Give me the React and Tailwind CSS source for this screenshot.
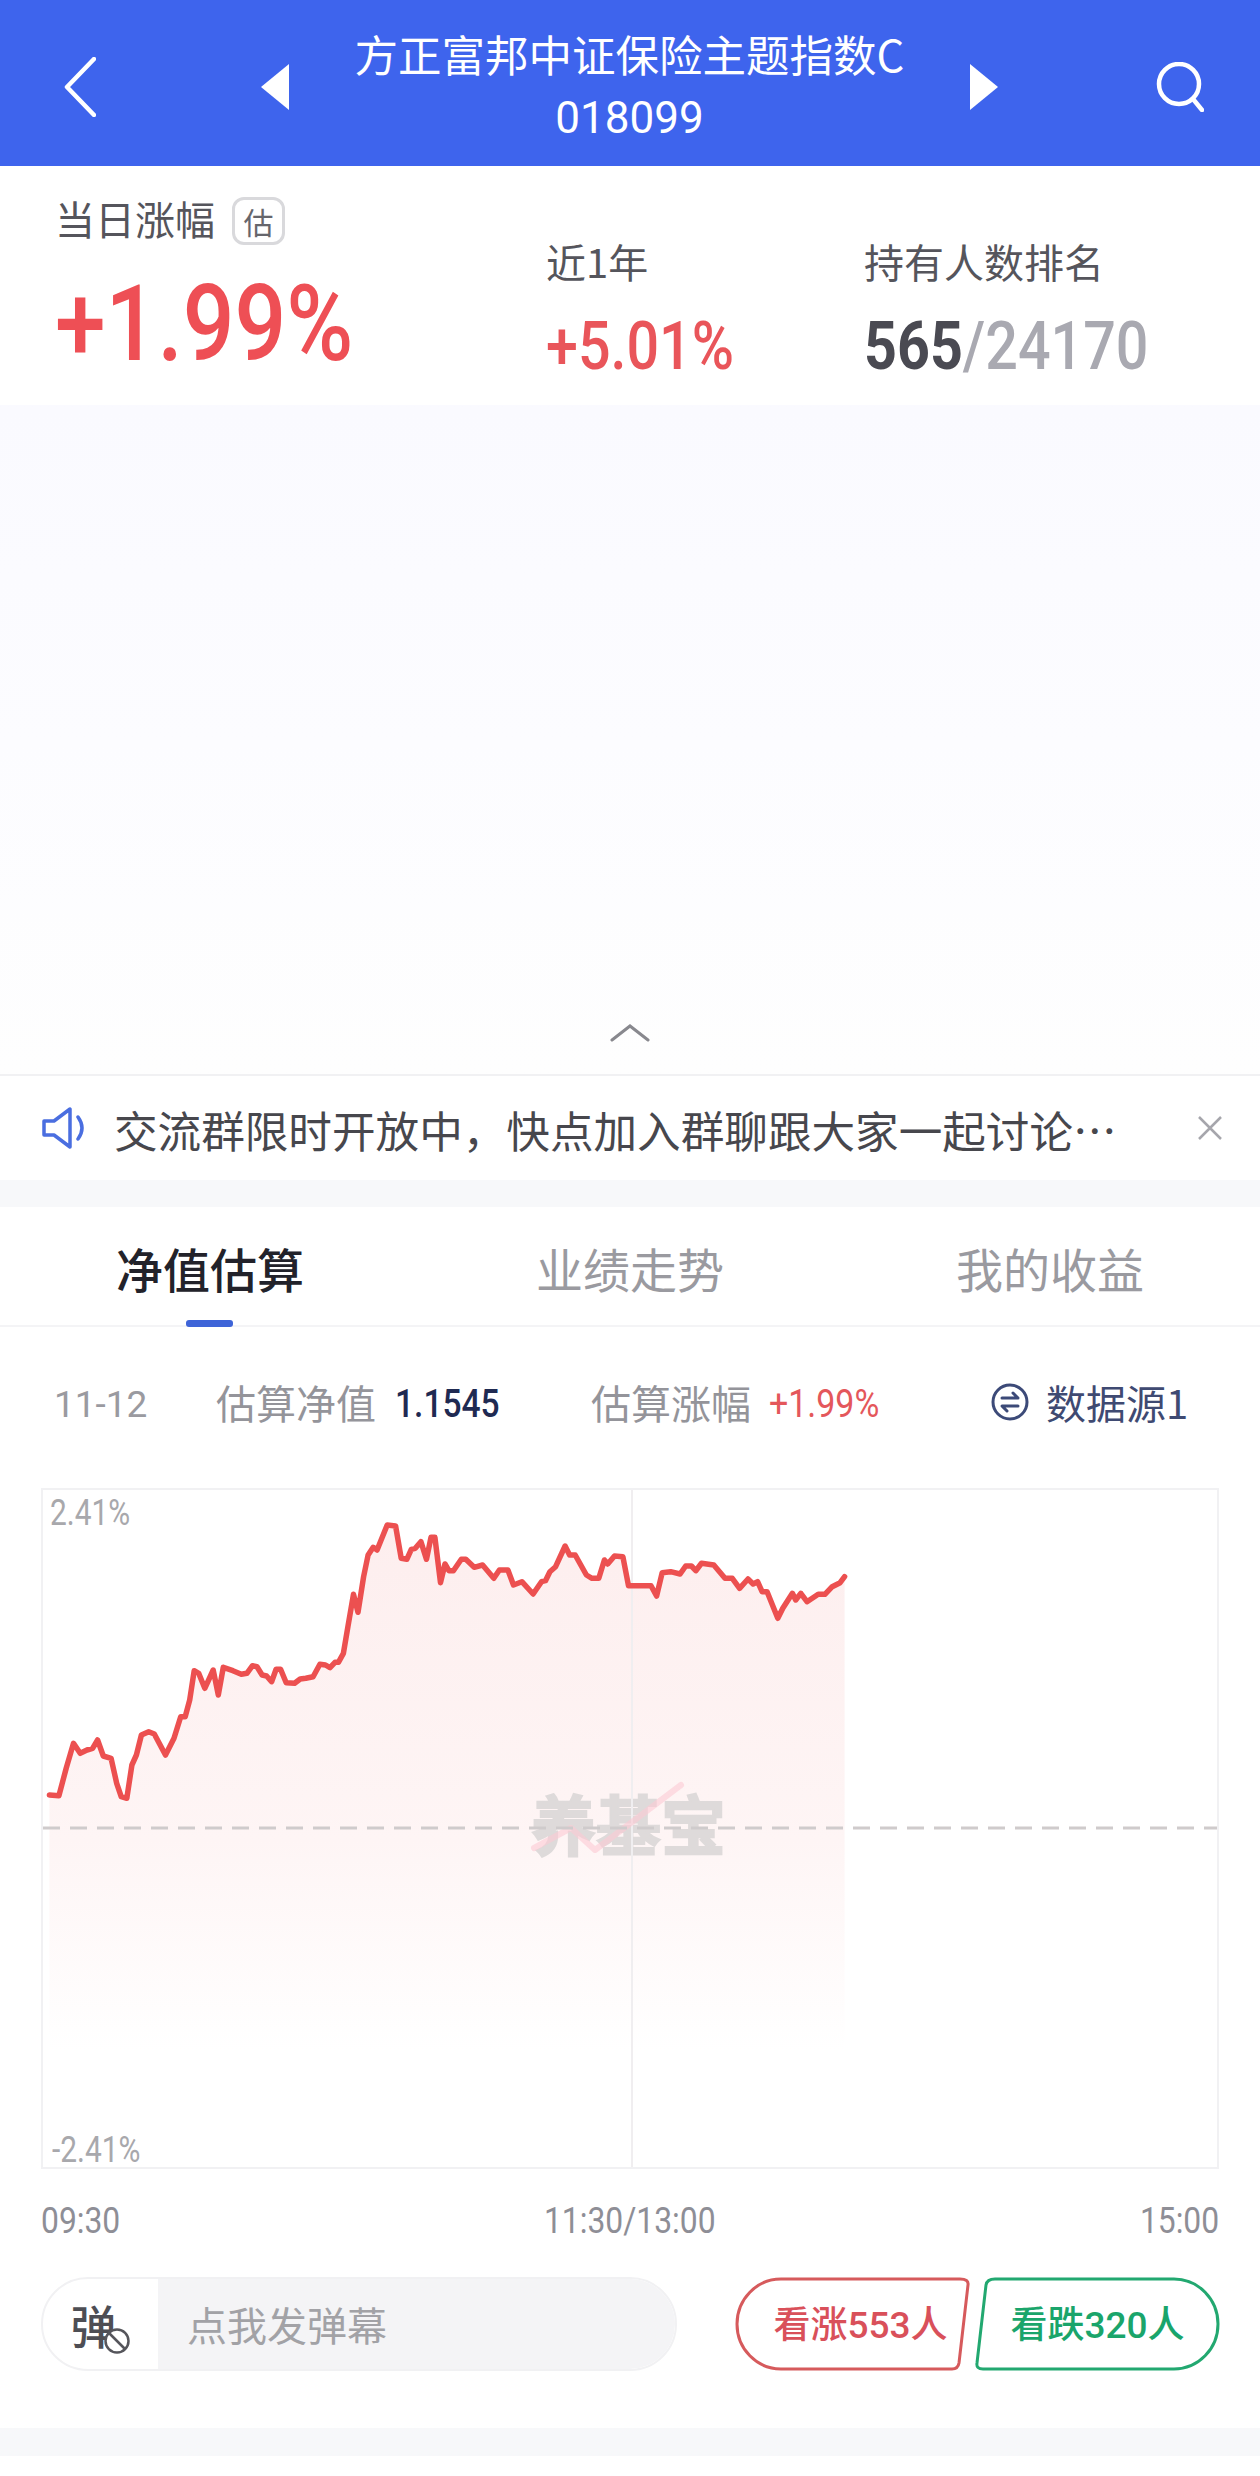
import React from 'react';

const numFont = "font-['Roboto','Liberation_Sans',sans-serif]";

// intraday estimate, x is in 1/1.782 px, y in 1/3 px above the chart origin
const rawLine = [
  [88,1005],[105,1007],[118,925],[131,850],[143,880],[155,870],[165,865],[174,840],[184,888],[198,895],[208,970],[216,1010],[226,1015],[235,915],[243,885],[252,825],[265,815],[275,822],[295,885],[310,835],[322,770],[330,770],[338,720],[346,632],[354,640],[365,685],[380,630],[389,705],[398,622],[415,632],[430,643],[440,640],[450,617],[458,620],[467,645],[475,648],[484,665],[492,628],[500,628],[510,668],[525,670],[535,657],[545,655],[558,650],[570,613],[580,615],[588,623],[597,607],[603,607],[612,580],[620,500],[630,403],[638,457],[648,350],[656,285],[665,262],[672,270],[690,195],[705,198],[715,295],[725,298],[733,268],[740,265],[750,245],[760,298],[768,232],[775,232],[785,368],[793,312],[800,332],[808,332],[822,298],[830,298],[845,322],[860,315],[880,355],[890,330],[905,330],[915,375],[930,365],[950,402],[965,365],[972,362],[980,335],[990,320],[1007,258],[1015,285],[1025,285],[1045,345],[1055,355],[1067,355],[1077,300],[1083,312],[1095,288],[1110,290],[1120,377],[1160,377],[1170,408],[1180,338],[1195,335],[1212,342],[1222,318],[1232,318],[1240,332],[1250,310],[1272,315],[1292,355],[1305,355],[1318,385],[1333,357],[1342,372],[1350,365],[1358,395],[1367,395],[1386,475],[1395,445],[1412,400],[1418,420],[1427,400],[1438,425],[1458,403],[1470,403],[1483,380],[1497,368],[1505,350],
];

const linePts = rawLine.map(([x, y]) => [(x / 1.782 - 43).toFixed(1), ((y / 3) - 30).toFixed(1)]);
const linePath = linePts.map((p) => p.join(',')).join(' ');
const areaPath = `M${linePts[0][0]},560 L${linePath.replaceAll(' ', ' L')} L${linePts[linePts.length - 1][0]},560 Z`;

const Triangle = ({ flip }) => (
  <svg viewBox="0 0 28 46" className="w-[28px] h-[46px] shrink-0" fill="#fff">
    <path d={flip ? 'M0 0 L28 23 L0 46 Z' : 'M28 0 L0 23 L28 46 Z'} />
  </svg>
);

const Chart = () => (
  <div className="relative mx-[41px] h-[681px] border-2 border-[#f1f1f3]">
    <svg viewBox="0 0 1174 677" className="absolute inset-0 w-full h-full">
      <defs>
        <linearGradient id="areaFill" x1="0" y1="0" x2="0" y2="1">
          <stop offset="0" stopColor="#fdeeee" />
          <stop offset="0.6" stopColor="#fef5f5" />
          <stop offset="1" stopColor="#ffffff" />
        </linearGradient>
      </defs>
      <path d={areaPath} fill="url(#areaFill)" />
      <text x="488" y="360" fontSize="65" fontWeight="700" fill="#dedada" stroke="#dedada" strokeWidth="2" className="font-['Noto_Sans_CJK_SC',sans-serif]">养基宝</text>
      <line x1="589" y1="0" x2="589" y2="677" stroke="#f0eef0" strokeWidth="2" />
      <path d="M491 358 L528 338 L552 360 L638 295" fill="none" stroke="#fbc9d4" strokeOpacity="0.6" strokeWidth="6" strokeLinecap="round" strokeLinejoin="round" />
      <line x1="0" y1="338" x2="1174" y2="338" stroke="#cfcbcc" strokeWidth="3" strokeDasharray="17 10" />
      <polyline points={linePath} fill="none" stroke="#ec5050" strokeWidth="5.5" strokeLinejoin="round" strokeLinecap="round" />
    </svg>
    <span className={`absolute left-[7px] top-[3px] text-[36px] leading-[40px] text-[#a8a8ac] origin-left scale-x-[0.83] ${numFont}`}>2.41%</span>
    <span className={`absolute left-[9px] top-[640px] text-[36px] leading-[40px] text-[#a8a8ac] origin-left scale-x-[0.83] ${numFont}`}>-2.41%</span>
  </div>
);

const App = () => {
  return (
    <div className="w-[1260px] h-[2476px] bg-white overflow-hidden font-['Noto_Sans_CJK_SC','Noto_Sans',sans-serif]">
      {/* top bar */}
      <header className="h-[166px] bg-[#3e64ed] flex items-center pt-[8px] pl-[64px] pr-[56px] text-white">
        <svg viewBox="0 0 32 60" className="w-[32px] h-[60px] shrink-0" fill="none" stroke="#fff" strokeWidth="4.5" strokeLinecap="round" strokeLinejoin="round">
          <path d="M30 2 L3 30 L30 58" />
        </svg>
        <div className="w-[165px] shrink-0" />
        <Triangle />
        <div className="flex-1 text-center pb-[2px]">
          <div className="text-[43.5px] leading-[64px]">方正富邦中证保险主题指数C</div>
          <div className={`text-[44px] leading-[64px] ${numFont}`}>018099</div>
        </div>
        <Triangle flip />
        <div className="w-[158px] shrink-0" />
        <svg viewBox="0 0 48 50" className="w-[48px] h-[50px] shrink-0" fill="none" stroke="#fff" strokeWidth="4.5" strokeLinecap="round">
          <circle cx="23" cy="22" r="20" />
          <path d="M37 37 L46 48" />
        </svg>
      </header>

      {/* headline figures */}
      <section className="h-[239px] flex items-start">
        <div className="w-[546px] pl-[55px] pt-[31px] shrink-0">
          <div className="flex items-center gap-[17px] h-[48px]">
            <span className="-mt-[7px] text-[40px] leading-[48px] text-[#55555c]">当日涨幅</span>
            <span className="w-[53px] h-[48px] rounded-[12px] border-[3px] border-[#d9d9dc] flex items-center justify-center text-[30px] text-[#66666c]">估</span>
          </div>
          <div className={`mt-[24px] text-[106px] leading-[110px] font-medium text-[#ee4f55] origin-left scale-x-[0.86] ${numFont}`}>+1.99%</div>
        </div>
        <div className="w-[318px] pt-[73px] shrink-0">
          <div className="text-[40px] leading-[44px] text-[#55555c]">近1年</div>
          <div className={`mt-[26px] text-[66px] leading-[76px] font-medium text-[#e9555a] origin-left scale-x-[0.87] ${numFont}`}>+5.01%</div>
        </div>
        <div className="pt-[73px]">
          <div className="text-[40px] leading-[44px] text-[#55555c]">持有人数排名</div>
          <div className={`mt-[26px] text-[66px] leading-[76px] font-bold text-[#4a4a52] origin-left scale-x-[0.87] whitespace-nowrap ${numFont}`}>
            565<span className="font-medium text-[#a9a9b1]">/24170</span>
          </div>
        </div>
      </section>

      {/* empty collapsible area */}
      <div className="h-[671px] bg-gradient-to-b from-[#fafaff] via-[#fcfcff] to-[#fefefe] flex flex-col justify-end items-center border-b-2 border-[#f1f1f3]">
        <svg viewBox="0 0 40 18" className="w-[40px] h-[18px] mb-[32px]" fill="none" stroke="#88888e" strokeWidth="3" strokeLinecap="round">
          <path d="M2 16 L20 2 L38 16" />
        </svg>
      </div>

      {/* notice */}
      <div className="h-[104px] flex items-center pl-[42px] pr-[37px]">
        <svg viewBox="0 0 46 42" className="w-[46px] h-[42px] shrink-0" fill="none" stroke="#4a6ee0" strokeWidth="3.5" strokeLinejoin="round" strokeLinecap="round">
          <path d="M2 14 H12 L28 2 V40 L12 28 H2 Z" />
          <path d="M36 10 Q44 21 36 32" />
        </svg>
        <span className="ml-[26px] text-[43.6px] leading-[54px] pt-[2px] text-[#47474d] whitespace-nowrap">交流群限时开放中，快点加入群聊跟大家一起讨论…</span>
        <svg viewBox="0 0 26 26" className="ml-auto w-[26px] h-[26px] shrink-0" fill="none" stroke="#a6a6ac" strokeWidth="2.5">
          <path d="M2 2 L24 24 M24 2 L2 24" />
        </svg>
      </div>

      <div className="h-[27px] bg-[#f7f8fa]" />

      {/* tabs */}
      <nav className="h-[120px] grid grid-cols-3 relative border-b-2 border-[#f4f4f6]">
        <div className="flex items-center justify-center pt-[4px] text-[47px] font-medium text-[#22222a]">净值估算</div>
        <div className="flex items-center justify-center pt-[4px] text-[47px] text-[#9a9aa0]">业绩走势</div>
        <div className="flex items-center justify-center pt-[4px] text-[47px] text-[#9a9aa0]">我的收益</div>
        <span className="absolute left-[186px] bottom-[-2px] w-[47px] h-[7px] rounded-[3px] bg-[#3e64d8]" />
      </nav>

      {/* estimate row */}
      <div className="h-[161px] flex items-center pl-[54px] pb-[6px]">
        <span className={`w-[162px] text-[37px] text-[#9a9aa0] ${numFont}`}>11-12</span>
        <span className="pb-[5px] text-[40px] text-[#94949a]">估算净值</span>
        <span className={`ml-[19px] w-[196px] text-[39px] font-medium text-[#1f2a52] origin-left scale-x-[0.86] ${numFont}`}>1.1545</span>
        <span className="pb-[5px] text-[40px] text-[#94949a]">估算涨幅</span>
        <span className={`ml-[18px] w-[222px] text-[39px] text-[#e4575b] origin-left scale-x-[0.87] ${numFont}`}>+1.99%</span>
        <svg viewBox="0 0 38 38" className="mb-[5px] w-[38px] h-[38px] shrink-0" fill="none" stroke="#3c4a78" strokeWidth="3" strokeLinecap="round" strokeLinejoin="round">
          <circle cx="19" cy="19" r="17" />
          <path d="M11 15 H27 L22 10 M27 23 H11 L16 28" />
        </svg>
        <span className="ml-[17px] pb-[5px] text-[40px] text-[#3f4a72]">数据源1</span>
      </div>

      <Chart />

      {/* time axis */}
      <div className={`mt-[34px] px-[41px] flex justify-between text-[37px] leading-[36px] text-[#8e8e96] ${numFont}`}>
        <span className="origin-left scale-x-[0.86]">09:30</span>
        <span className="scale-x-[0.86]">11:30/13:00</span>
        <span className="origin-right scale-x-[0.86]">15:00</span>
      </div>

      {/* barrage input and vote buttons */}
      <div className="mt-[38px] pl-[41px] flex items-stretch h-[94px]">
        <div className="w-[636px] rounded-full border-2 border-[#f1f1f3] overflow-hidden flex">
          <div className="w-[115px] flex items-center justify-center relative text-[#4e4e54]">
            <span className="text-[46px] font-medium leading-none -ml-[14px]">弹</span>
            <svg viewBox="0 0 28 28" className="absolute left-[60px] top-[48px] w-[28px] h-[28px]" fill="#fff" stroke="#55555b" strokeWidth="2.5">
              <circle cx="14" cy="14" r="11.5" />
              <path d="M6 6 L22 22" />
            </svg>
          </div>
          <div className="flex-1 bg-[#f4f4f6] flex items-center pl-[29px] text-[40px] text-[#a2a2a6]">点我发弹幕</div>
        </div>
        <button className="relative ml-[58px] w-[235px] text-[37px] font-medium text-[#d9505a]">
          <svg viewBox="0 0 235 94" className="absolute inset-0 w-full h-full" fill="none" stroke="#d65a5c" strokeWidth="3">
            <path d="M46 2 H225 Q234 2 233 8 L224 86 Q223 92 217 92 H46 A44 45 0 0 1 46 2 Z" />
          </svg>
          <span className="relative ml-[16px]">看涨<span className={numFont}>553</span>人</span>
        </button>
        <button className="relative ml-[5px] w-[245px] text-[37px] font-medium text-[#1aa56b]">
          <svg viewBox="0 0 245 94" className="absolute inset-0 w-full h-full" fill="none" stroke="#22a870" strokeWidth="3">
            <path d="M199 2 H20 Q12 2 11 8 L2 86 Q1 92 8 92 H199 A44 45 0 0 0 199 2 Z" />
          </svg>
          <span className="relative">看跌<span className={numFont}>320</span>人</span>
        </button>
      </div>

      <div className="mt-[57px] h-[28px] bg-[#f7f8fa]" />
    </div>
  );
};

export default App;
